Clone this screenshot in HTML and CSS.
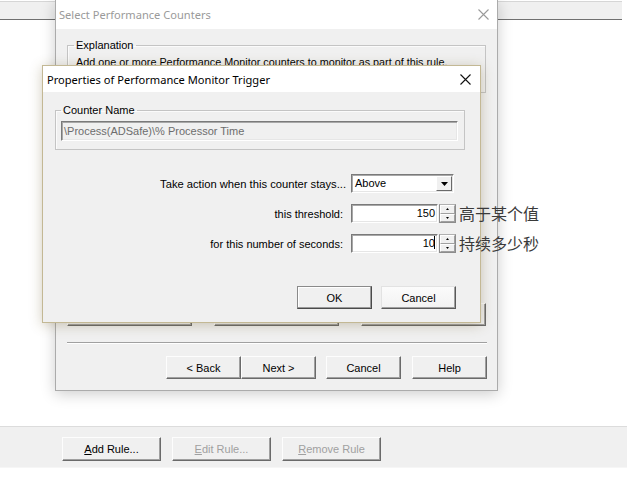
FILE: index.html
```html
<!DOCTYPE html>
<html lang="en">
<head>
<meta charset="utf-8">
<title>Properties of Performance Monitor Trigger</title>
<link rel="stylesheet" href="styles.css">
</head>
<body>
<div class="screen">
  <div class="topstrip"></div>
  <div class="workspace"></div>
  <div class="rulebar">
    <button class="btn rule"><u>A</u>dd Rule...</button>
    <button class="btn rule disabled"><u>E</u>dit Rule...</button>
    <button class="btn rule disabled"><u>R</u>emove Rule</button>
  </div>

  <div class="dialog back">
    <div class="titlebar">
      <span class="title inactive">Select Performance Counters</span>
      <span class="close">
        <svg width="11" height="11" viewBox="0 0 11 11"><path d="M0.5 0.5L10.5 10.5M10.5 0.5L0.5 10.5" stroke="#9a9a9a" stroke-width="1.1" fill="none"/></svg>
      </span>
    </div>
    <div class="back-body">
      <fieldset class="group explain">
        <legend>Explanation</legend>
        <p class="explain-text">Add one or more Performance Monitor counters to monitor as part of this rule.</p>
      </fieldset>
      <div class="fill"></div>
      <div class="hidden-row">
        <button class="btn mid"></button>
        <button class="btn mid"></button>
        <button class="btn mid"></button>
      </div>
      <div class="separator"></div>
      <div class="wizard-row">
        <button class="btn std">&lt; Back</button>
        <button class="btn std next">Next &gt;</button>
        <button class="btn std cancel">Cancel</button>
        <button class="btn std help">Help</button>
      </div>
    </div>
  </div>

  <div class="dialog front">
    <div class="titlebar front-title">
      <span class="title">Properties of Performance Monitor Trigger</span>
      <span class="close">
        <svg width="11" height="11" viewBox="0 0 11 11"><path d="M0.5 0.5L10.5 10.5M10.5 0.5L0.5 10.5" stroke="#111" stroke-width="1.1" fill="none"/></svg>
      </span>
    </div>
    <div class="front-body">
      <fieldset class="group counter">
        <legend>Counter Name</legend>
        <div class="field disabled-field">\Process(ADSafe)\% Processor Time</div>
      </fieldset>
      <div class="form">
        <label class="lbl first">Take action when this counter stays...</label>
        <div class="ctl">
          <div class="select">
            <span class="select-text">Above</span>
            <span class="drop"><svg width="7" height="4" viewBox="0 0 7 4"><path d="M0 0H7L3.5 4Z" fill="#000"/></svg></span>
          </div>
        </div>
        <label class="lbl">this threshold:</label>
        <div class="ctl">
          <div class="field num">150</div>
          <div class="spin">
            <span class="spin-btn"><svg width="3" height="2" viewBox="0 0 3 2"><path d="M1.5 0L3 2H0Z" fill="#000"/></svg></span>
            <span class="spin-btn"><svg width="3" height="2" viewBox="0 0 3 2"><path d="M0 0H3L1.5 2Z" fill="#000"/></svg></span>
          </div>
          <span class="note">高于某个值</span>
        </div>
        <label class="lbl">for this number of seconds:</label>
        <div class="ctl">
          <div class="field num">10<span class="caret"></span></div>
          <div class="spin">
            <span class="spin-btn"><svg width="3" height="2" viewBox="0 0 3 2"><path d="M1.5 0L3 2H0Z" fill="#000"/></svg></span>
            <span class="spin-btn"><svg width="3" height="2" viewBox="0 0 3 2"><path d="M0 0H3L1.5 2Z" fill="#000"/></svg></span>
          </div>
          <span class="note">持续多少秒</span>
        </div>
      </div>
      <div class="actions">
        <button class="btn std default">OK</button>
        <button class="btn std light">Cancel</button>
      </div>
    </div>
  </div>
</div>
</body>
</html>
```

FILE: styles.css
```css
* { box-sizing: border-box; }
html, body { margin: 0; padding: 0; background: #fff; }
body {
  font-family: "Liberation Sans", Arial, sans-serif;
  font-size: 11px;
  color: #000;
}
.screen {
  position: relative;
  width: 633px;
  height: 484px;
  overflow: hidden;
  display: flex;
  flex-direction: column;
}
.topstrip {
  margin-top: 1px;
  height: 19px;
  width: 622px;
  background: #f0f0f0;
  border-top: 1px solid #d6d6d6;
  border-bottom: 1px solid #707070;
}
.workspace { flex: 1; }
.rulebar {
  height: 42px;
  width: 627px;
  margin-bottom: 16px;
  background: #f0f0f0;
  border-top: 1px solid #dcdcdc;
  border-bottom: 1px solid #f6f6f6;
  display: flex;
  align-items: flex-start;
  gap: 11px;
  padding: 10px 0 0 62px;
}

/* buttons */
.btn {
  font-family: "Liberation Sans", Arial, sans-serif;
  font-size: 11px;
  color: #000;
  background: #f0f0f0;
  border: 1px solid;
  border-color: #fdfdfd #6a6a6a #6a6a6a #fdfdfd;
  box-shadow: inset -1px -1px 0 #a0a0a0;
  padding: 0;
  margin: 0;
  height: 23px;
  line-height: 20px;
  text-align: center;
}
.btn u { text-decoration: underline; text-underline-offset: 1px; }
.rule { width: 99px; height: 24px; }
.disabled { color: #a0a0a0; }
.std { width: 75px; }
.mid { width: 125px; }
.default {
  border-color: #8a8a8a #4a4a4a #4a4a4a #8a8a8a;
  box-shadow: inset -1px -1px 0 #9a9a9a, inset 1px 1px 0 #fff;
}
.light {
  background: linear-gradient(#fbfbfb, #f2f2f2);
  border-color: #e2e2e2 #5a5a5a #5a5a5a #e2e2e2;
}

/* dialogs */
.dialog {
  position: absolute;
  background: #f0f0f0;
  display: flex;
  flex-direction: column;
}
.titlebar {
  flex: none;
  display: flex;
  align-items: center;
  justify-content: space-between;
  background: #fff;
}
.title {
  font-family: "Noto Sans", "Liberation Sans", sans-serif;
  font-size: 11.1px;
  white-space: nowrap;
}
.inactive { color: #9a9a9a; }
.close {
  width: 28px;
  display: flex;
  justify-content: center;
  align-items: center;
}

.back {
  left: 55px;
  top: 0;
  width: 443px;
  height: 391px;
  border: 1px solid #ababab;
  border-top: 0;
  box-shadow: 0 3px 14px rgba(0, 0, 0, 0.2);
}
.back .titlebar { height: 29px; padding-left: 3px; }
.back-body {
  flex: 1;
  display: flex;
  flex-direction: column;
  padding: 9px 10px 11px 11px;
}
.group {
  margin: 0;
  border: 1px solid #c4c4c4;
  box-shadow: inset 1px 1px 0 #fbfbfb;
  min-width: 0;
}
.group legend {
  font-size: 11px;
  line-height: 14px;
  padding: 0 2px;
}
.explain {
  margin-right: 1px;
  padding: 3px 8px 23px 8px;
}
.explain legend { margin-left: -2px; }
.explain-text {
  margin: 0;
  font-size: 10.8px;
  line-height: 14px;
  white-space: nowrap;
}
.fill { flex: 1; }
.hidden-row { display: flex; gap: 22px; height: 23px; }
.separator {
  margin-top: 16px;
  height: 2px;
  border-top: 1px solid #a0a0a0;
  border-bottom: 1px solid #fff;
}
.wizard-row {
  margin-top: 12px;
  display: flex;
  justify-content: flex-end;
}
.next { margin-left: 0; }
.cancel { margin-left: 10px; }
.help { margin-left: 11px; }

.front {
  left: 42px;
  top: 65px;
  width: 439px;
  height: 258px;
  border: 1px solid #c3b894;
  box-shadow: 0 2px 12px rgba(110, 90, 40, 0.3);
  z-index: 2;
}
.front .titlebar { height: 26px; padding-left: 4px; }
.front .close { width: 30px; }
.front-body {
  flex: 1;
  padding: 11px 15px 0 12px;
  display: flex;
  flex-direction: column;
}
.counter {
  width: 410px;
  padding: 4px 6px 8px 5px;
}
.field {
  height: 20px;
  background: #fff;
  border: 1px solid;
  border-color: #7a7a7a #fff #fff #7a7a7a;
  box-shadow: inset 1px 1px 0 #a8a8a8, inset -1px -1px 0 #e6e6e6;
  white-space: nowrap;
}
.disabled-field {
  background: #f0f0f0;
  color: #6d6d6d;
  font-size: 11px;
  line-height: 18px;
  padding-left: 2px;
}
.form {
  margin: 24px 0 0 -12px;
  display: grid;
  grid-template-columns: 308px auto;
  row-gap: 11px;
}
.lbl {
  justify-self: end;
  align-self: center;
  padding-right: 8px;
  white-space: nowrap;
}
.lbl.first { padding-right: 5px; font-size: 11.2px; }
.ctl {
  display: flex;
  align-items: center;
  height: 19px;
  overflow: visible;
}
.select {
  width: 103px;
  height: 19px;
  background: #fff;
  border: 1px solid;
  border-color: #7a7a7a #fff #fff #7a7a7a;
  box-shadow: inset 1px 1px 0 #a8a8a8, inset -1px -1px 0 #e6e6e6;
  display: flex;
  align-items: center;
  justify-content: space-between;
  padding: 0 1px 0 3px;
}
.select-text { line-height: 15px; }
.drop {
  width: 16px;
  height: 15px;
  background: #f0f0f0;
  border: 1px solid;
  border-color: #fff #6a6a6a #6a6a6a #fff;
  display: flex;
  align-items: center;
  justify-content: center;
}
.num {
  width: 87px;
  height: 19px;
  text-align: right;
  line-height: 17px;
  padding-right: 2px;
}
.caret {
  display: inline-block;
  width: 1px;
  height: 13px;
  background: #000;
  vertical-align: -2px;
  margin-left: -1px;
}
.spin {
  margin-left: 1px;
  width: 17px;
  height: 19px;
  display: flex;
  flex-direction: column;
  border: 1px solid #8c8c8c;
  border-top-color: #b0b0b0;
}
.spin-btn {
  flex: 1;
  background: #f0f0f0;
  border: 1px solid;
  border-color: #fff #a0a0a0 #a0a0a0 #fff;
  display: flex;
  align-items: center;
  justify-content: center;
}
.note {
  margin-left: 3px;
  font-family: "Noto Sans CJK SC", "Noto Sans", sans-serif;
  font-size: 16px;
  line-height: 19px;
  color: #3a3a3a;
  white-space: nowrap;
}
.actions {
  margin-top: 33px;
  margin-right: 9px;
  display: flex;
  justify-content: flex-end;
  gap: 9px;
}
```
